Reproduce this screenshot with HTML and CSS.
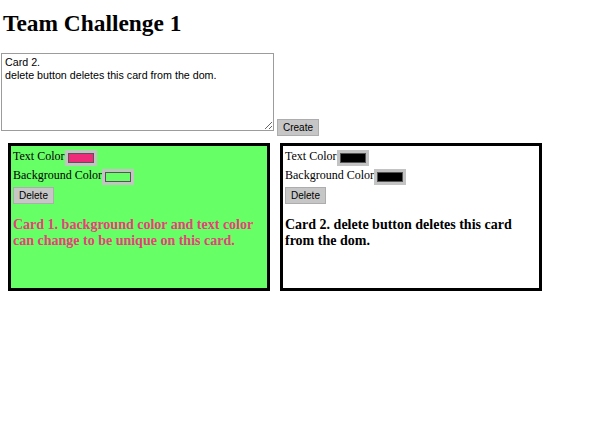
FILE: index.html
```html
<!DOCTYPE html>
<html>
<head>
<meta charset="utf-8">
<link rel="stylesheet" href="styles.css">
</head>
<body>
<h1 class="title">Team Challenge 1</h1>
<div class="composer">
<textarea class="composer-input">Card 2.
delete button deletes this card from the dom.</textarea><button class="btn btn-create">Create</button>
</div>
<div class="cards">
  <div class="card card-green">
    <div class="row row-first"><span class="label">Text Color</span><input type="color" class="swatch" value="#ee2a7b"></div>
    <div class="row row-second"><span class="label">Background Color</span><input type="color" class="swatch" value="#66ff66"></div>
    <button class="btn btn-delete">Delete</button>
    <h3 class="card-text">Card 1. background color and text color can change to be unique on this card.</h3>
  </div>
  <div class="card card-white">
    <div class="row row-first"><span class="label">Text Color</span><input type="color" class="swatch" value="#000000"></div>
    <div class="row row-second"><span class="label">Background Color</span><input type="color" class="swatch" value="#000000"></div>
    <button class="btn btn-delete">Delete</button>
    <h3 class="card-text">Card 2. delete button deletes this card from the dom.</h3>
  </div>
</div>
</body>
</html>
```
FILE: styles.css
```css
html, body {
  margin: 0;
  padding: 0;
  background: #ffffff;
}
body {
  font-family: "Liberation Serif", "Times New Roman", serif;
  color: #000;
}
.title {
  font-family: "Liberation Serif", "Times New Roman", serif;
  font-weight: bold;
  font-size: 23.4px;
  line-height: 27px;
  height: 27px;
  margin: 10px 0 16px 3px;
}
.composer {
  display: flex;
  align-items: flex-end;
  padding-left: 1px;
}
.composer-input {
  box-sizing: border-box;
  width: 273px;
  height: 78px;
  margin: 0 0 5px 0;
  padding: 2px 3px;
  border: 1px solid #9c9c9c;
  font-family: "Liberation Sans", Arial, sans-serif;
  font-size: 10.7px;
  line-height: 13px;
  color: #000;
  resize: both;
}
.btn {
  box-sizing: border-box;
  margin: 0;
  padding: 0 5px;
  height: 17px;
  background: #c6c6c6;
  border: 1px solid #adadad;
  border-radius: 0;
  font-family: "Liberation Sans", Arial, sans-serif;
  font-size: 10px;
  line-height: 14px;
  color: #000;
}
.btn-create {
  width: 42px;
  margin-left: 3px;
}
.cards {
  display: flex;
  gap: 10px;
  margin-top: 7px;
  padding-left: 8px;
}
.card {
  box-sizing: border-box;
  width: 262px;
  height: 148px;
  border: 3px solid #000;
  padding: 4px 5px 0 2px;
}
.card-green {
  background: #66ff66;
  color: #e8407a;
}
.card-white {
  background: #ffffff;
  color: #000;
}
.row {
  display: flex;
  align-items: flex-start;
}
.row-first {
  margin-bottom: 3px;
}
.row-second {
  margin-bottom: 2px;
}
.label {
  font-size: 12px;
  line-height: 12px;
  color: #000;
  white-space: nowrap;
}
.swatch {
  -webkit-appearance: none;
  appearance: none;
  box-sizing: border-box;
  width: 32px;
  height: 16px;
  margin: 0;
  padding: 3px;
  border: none;
  background: #c3c3c3;
}
.swatch::-webkit-color-swatch-wrapper {
  padding: 0;
}
.swatch::-webkit-color-swatch {
  border: 1px solid #555;
}
.btn-delete {
  display: block;
  width: 41px;
}
.card-text {
  font-family: "Liberation Serif", "Times New Roman", serif;
  font-weight: bold;
  font-size: 14px;
  line-height: 16px;
  margin: 13px 0 0 0;
}
```
